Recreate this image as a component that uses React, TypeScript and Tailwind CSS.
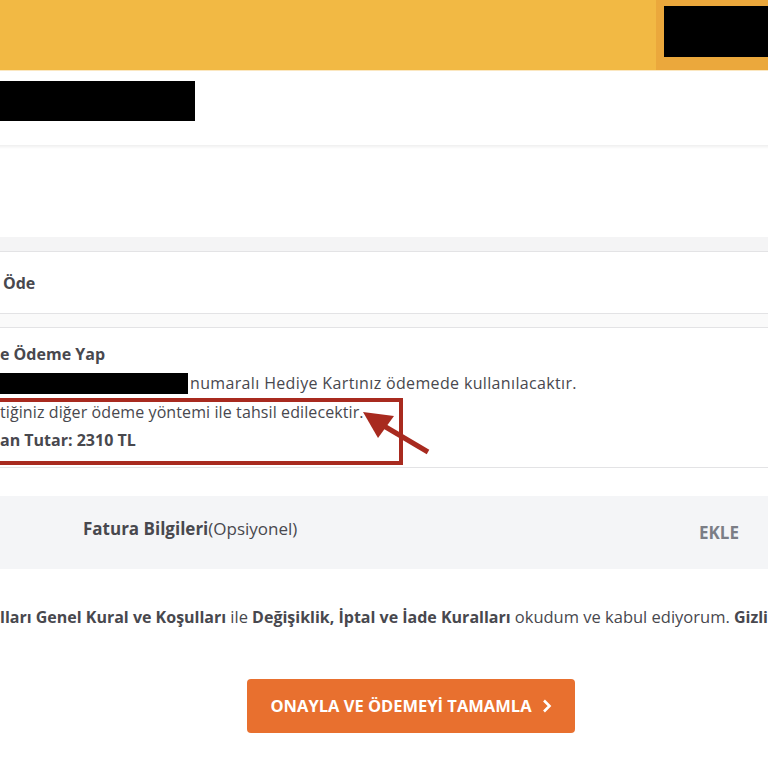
import React from "react";

export default function App() {
  const font = { fontFamily: '"Open Sans", "Noto Sans", sans-serif' };
  return (
    <div className="w-[768px] h-[768px] overflow-hidden bg-white text-[#48484e] relative" style={font}>
      {/* header */}
      <div className="flex h-[70px]">
        <div className="flex-1 bg-[#f2b944]" />
        <div className="w-[112px] bg-[#eba83c] pt-[6px] pl-[8px]">
          <div className="h-[51px] bg-black" />
        </div>
      </div>
      <div className="h-[75px] bg-white border-t border-[#fbe7c0]">
        <div className="mt-[10px] w-[195px] h-[40px] bg-black" />
      </div>
      <div className="h-[92px] bg-gradient-to-b from-[#efefef] via-white to-white" style={{ backgroundSize: "100% 8px", backgroundRepeat: "no-repeat" }} />
      <div className="h-[14px] bg-[#f4f4f5]" />
      {/* box 1 */}
      <div className="h-[63px] border-y border-[#e3e3e5] bg-white flex items-center">
        <span className="pl-[3px] text-[16px] font-bold">Öde</span>
      </div>
      <div className="h-[13px] bg-[#fafafa]" />
      {/* box 2 */}
      <div className="h-[141px] border-y border-[#e3e3e5] bg-white pt-[12px] text-[16px] leading-[29px]">
        <div className="font-bold">e Ödeme Yap</div>
        <div className="flex items-center">
          <div className="w-[188px] h-[21px] bg-black" />
          <span className="ml-[2px] tracking-[0.35px]">numaralı Hediye Kartınız ödemede kullanılacaktır.</span>
        </div>
        <div className="tracking-[0.1px]">tiğiniz diğer ödeme yöntemi ile tahsil edilecektir.</div>
        <div className="font-bold -mt-[1px]">an Tutar: 2310 TL</div>
      </div>
      {/* annotation */}
      <div className="absolute left-[-10px] top-[398px] w-[413px] h-[67px] border-[4px] border-[#a82a1f]" />
      <svg className="absolute left-0 top-0" width="768" height="768" viewBox="0 0 768 768">
        <line x1="428" y1="452" x2="384" y2="426" stroke="#a82a1f" strokeWidth="5" />
        <polygon points="363,412 394,416 378,438" fill="#a82a1f" />
      </svg>
      <div className="h-[28px]" />
      {/* fatura */}
      <div className="h-[73px] bg-[#f4f5f7] flex items-center justify-between pl-[83px] pr-[29px]">
        <div className="text-[17px] -mt-[8px]">
          <span className="font-bold">Fatura Bilgileri</span>
          <span>(Opsiyonel)</span>
        </div>
        <span className="text-[17px] font-bold text-[#7b7e86]">EKLE</span>
      </div>
      {/* terms */}
      <div className="mt-[37px] whitespace-nowrap text-[16px] leading-[22px]">
        <span className="font-bold">lları Genel Kural ve Koşulları</span>{" "}
        <span className="text-[16.5px]">ile</span>{" "}
        <span className="font-bold">Değişiklik, İptal ve İade Kuralları</span>{" "}
        <span className="text-[16.5px]">okudum ve kabul ediyorum.</span>{" "}
        <span className="font-bold">Gizlilik</span>
      </div>
      {/* button */}
      <div className="mt-[51px] flex">
        <div className="ml-[247px] w-[328px] h-[54px] rounded-[4px] bg-[#e8702f] flex items-center justify-center text-white font-bold text-[16.5px] gap-[10px]">
          <span>ONAYLA VE ÖDEMEYİ TAMAMLA</span>
          <svg width="10" height="14" viewBox="0 0 10 14">
            <path d="M2 1.5 L7.5 7 L2 12.5" stroke="white" strokeWidth="2.6" fill="none" />
          </svg>
        </div>
      </div>
    </div>
  );
}
